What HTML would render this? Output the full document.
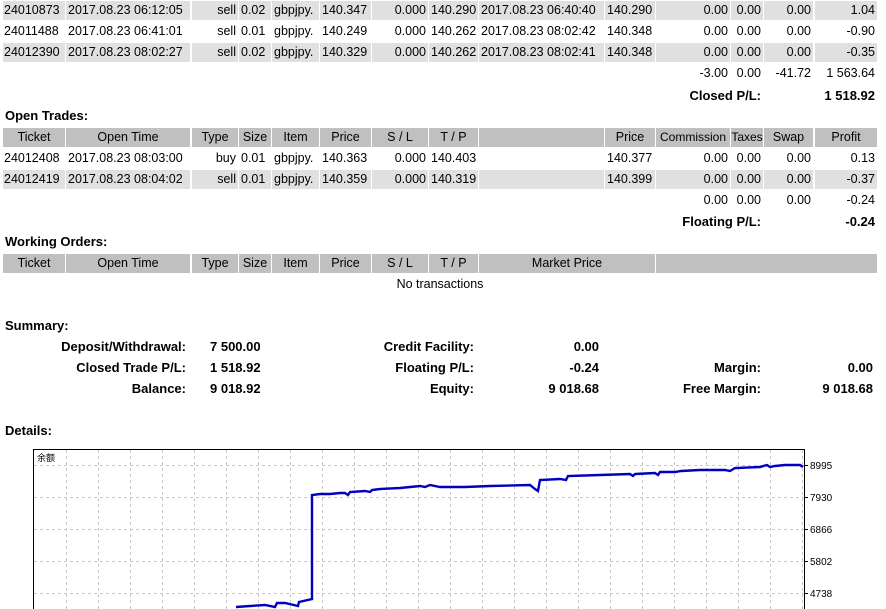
<!DOCTYPE html><html><head><meta charset="utf-8"><style>
body{margin:0;width:886px;height:609px;overflow:hidden;background:#fff;font-family:"Liberation Sans",sans-serif;font-size:12.5px;color:#000;position:relative}
.r{position:absolute;left:0;width:886px;height:19px}
.r span{position:absolute;top:0;height:19px;line-height:19px;white-space:nowrap;padding:0 2px;box-sizing:border-box;overflow:hidden}
.g span{background:#e0e0e0}
.h span{background:#c0c0c0;text-align:center}
.R{text-align:right}.C{text-align:center}
.c1{left:3px;width:62px;padding:0 1px!important}.c2{left:66px;width:124px}.c3{left:192px;width:46px}.c4{left:239px;width:32px}
.c5{left:272px;width:47px}.c6{left:320px;width:51px}.c7{left:372px;width:56px}.c8{left:429px;width:49px}
.c9{left:479px;width:125px}.c10{left:605px;width:50px}.c11{left:656px;width:74px}.c12{left:731px;width:32px}
.c13{left:764px;width:49px}.c14{left:815px;width:62px}
.b{font-weight:bold;font-size:13px}
.t{position:absolute;white-space:nowrap;line-height:16px}
</style></head><body>
<div class="r g" style="top:1px"><span class="c1">24010873</span><span class="c2">2017.08.23 06:12:05</span><span class="c3 R">sell</span><span class="c4">0.02</span><span class="c5">gbpjpy.</span><span class="c6">140.347</span><span class="c7 R">0.000</span><span class="c8">140.290</span><span class="c9">2017.08.23 06:40:40</span><span class="c10">140.290</span><span class="c11 R">0.00</span><span class="c12 R">0.00</span><span class="c13 R">0.00</span><span class="c14 R">1.04</span></div>
<div class="r" style="top:22px"><span class="c1">24011488</span><span class="c2">2017.08.23 06:41:01</span><span class="c3 R">sell</span><span class="c4">0.01</span><span class="c5">gbpjpy.</span><span class="c6">140.249</span><span class="c7 R">0.000</span><span class="c8">140.262</span><span class="c9">2017.08.23 08:02:42</span><span class="c10">140.348</span><span class="c11 R">0.00</span><span class="c12 R">0.00</span><span class="c13 R">0.00</span><span class="c14 R">-0.90</span></div>
<div class="r g" style="top:43px"><span class="c1">24012390</span><span class="c2">2017.08.23 08:02:27</span><span class="c3 R">sell</span><span class="c4">0.02</span><span class="c5">gbpjpy.</span><span class="c6">140.329</span><span class="c7 R">0.000</span><span class="c8">140.262</span><span class="c9">2017.08.23 08:02:41</span><span class="c10">140.348</span><span class="c11 R">0.00</span><span class="c12 R">0.00</span><span class="c13 R">0.00</span><span class="c14 R">-0.35</span></div>
<div class="r" style="top:64px"><span class="c11 R">-3.00</span><span class="c12 R">0.00</span><span class="c13 R">-41.72</span><span class="c14 R">1 563.64</span></div>
<div class="r b" style="top:86px"><span class="R" style="left:640px;width:123px">Closed P/L:</span><span class="c14 R">1 518.92</span></div>
<div class="t b" style="left:5px;top:108px">Open Trades:</div>
<div class="r h" style="top:128px"><span class="c1">Ticket</span><span class="c2">Open Time</span><span class="c3">Type</span><span class="c4">Size</span><span class="c5">Item</span><span class="c6">Price</span><span class="c7">S / L</span><span class="c8">T / P</span><span class="c9"></span><span class="c10 R">Price</span><span class="c11" style="padding:0;font-size:12px">Commission</span><span class="c12" style="padding:0;font-size:12px">Taxes</span><span class="c13">Swap</span><span class="c14">Profit</span></div>
<div class="r" style="top:149px"><span class="c1">24012408</span><span class="c2">2017.08.23 08:03:00</span><span class="c3 R">buy</span><span class="c4">0.01</span><span class="c5">gbpjpy.</span><span class="c6">140.363</span><span class="c7 R">0.000</span><span class="c8">140.403</span><span class="c9"></span><span class="c10">140.377</span><span class="c11 R">0.00</span><span class="c12 R">0.00</span><span class="c13 R">0.00</span><span class="c14 R">0.13</span></div>
<div class="r g" style="top:170px"><span class="c1">24012419</span><span class="c2">2017.08.23 08:04:02</span><span class="c3 R">sell</span><span class="c4">0.01</span><span class="c5">gbpjpy.</span><span class="c6">140.359</span><span class="c7 R">0.000</span><span class="c8">140.319</span><span class="c9"></span><span class="c10">140.399</span><span class="c11 R">0.00</span><span class="c12 R">0.00</span><span class="c13 R">0.00</span><span class="c14 R">-0.37</span></div>
<div class="r" style="top:191px"><span class="c11 R">0.00</span><span class="c12 R">0.00</span><span class="c13 R">0.00</span><span class="c14 R">-0.24</span></div>
<div class="r b" style="top:212px"><span class="R" style="left:640px;width:123px">Floating P/L:</span><span class="c14 R">-0.24</span></div>
<div class="t b" style="left:5px;top:234px">Working Orders:</div>
<div class="r h" style="top:254px"><span class="c1">Ticket</span><span class="c2">Open Time</span><span class="c3">Type</span><span class="c4">Size</span><span class="c5">Item</span><span class="c6">Price</span><span class="c7">S / L</span><span class="c8">T / P</span><span class="c9" style="width:176px">Market Price</span><span style="left:656px;width:221px"></span></div>
<div class="r" style="top:275px"><span class="C" style="left:3px;width:874px">No transactions</span></div>
<div class="t b" style="left:5px;top:318px">Summary:</div>
<div class="b">
<div class="t R" style="right:700px;top:339px">Deposit/Withdrawal:</div><div class="t" style="left:210px;top:339px">7 500.00</div>
<div class="t" style="right:412px;top:339px">Credit Facility:</div><div class="t" style="right:287px;top:339px">0.00</div>
<div class="t" style="right:700px;top:360px">Closed Trade P/L:</div><div class="t" style="left:210px;top:360px">1 518.92</div>
<div class="t" style="right:412px;top:360px">Floating P/L:</div><div class="t" style="right:287px;top:360px">-0.24</div>
<div class="t" style="right:125px;top:360px">Margin:</div><div class="t" style="right:13px;top:360px">0.00</div>
<div class="t" style="right:700px;top:381px">Balance:</div><div class="t" style="left:210px;top:381px">9 018.92</div>
<div class="t" style="right:412px;top:381px">Equity:</div><div class="t" style="right:287px;top:381px">9 018.68</div>
<div class="t" style="right:125px;top:381px">Free Margin:</div><div class="t" style="right:13px;top:381px">9 018.68</div>
</div>
<div class="t b" style="left:5px;top:423px">Details:</div>
<svg style="position:absolute;left:0;top:0" width="886" height="609">
<g stroke="#c8c8c8" stroke-dasharray="3,3" stroke-width="1">
<path d="M66.5 450V609M98.5 450V609M130.5 450V609M162.5 450V609M194.5 450V609M226.5 450V609M258.5 450V609M290.5 450V609M322.5 450V609M354.5 450V609M386.5 450V609M418.5 450V609M450.5 450V609M482.5 450V609M514.5 450V609M546.5 450V609M578.5 450V609M610.5 450V609M642.5 450V609M674.5 450V609M706.5 450V609M738.5 450V609M770.5 450V609M802.5 450V609"/>
<path d="M34 465.5H804M34 497.5H804M34 529.5H804M34 561.5H804M34 593.5H804"/>
</g>
<path d="M33.5 609V449.5H804.5V609" fill="none" stroke="#000"/>
<g stroke="#000"><path d="M805 465.5h3M805 497.5h3M805 529.5h3M805 561.5h3M805 593.5h3"/></g>
<g font-family="Liberation Sans,sans-serif" font-size="10"><text x="810" y="469">8995</text><text x="810" y="501">7930</text><text x="810" y="533">6866</text><text x="810" y="565">5802</text><text x="810" y="597">4738</text></g>
<text x="37" y="461" font-family="Noto Sans CJK SC,sans-serif" font-size="9">余额</text>
<polyline fill="none" stroke="#0000c0" stroke-width="2.4" points="236,607 250,606 265,605 275,607 277,603 285,603 298,606 299,602 312,599 312,495 320,494 330,494 340,493 345,493 348,495 350,492 365,491 370,492 372,490 380,489 400,488 420,486 425,487 430,485 440,487 465,487 490,486 530,485 535,489 538,491 540,480 560,479 566,480 568,476 600,475 630,474 633,476 635,474 655,473 658,475 660,472 675,472 681,471 700,470 725,470 730,471 735,468 760,467 767,465 770,467 775,466 785,465 800,465 803,467"/>
</svg>
</body></html>
